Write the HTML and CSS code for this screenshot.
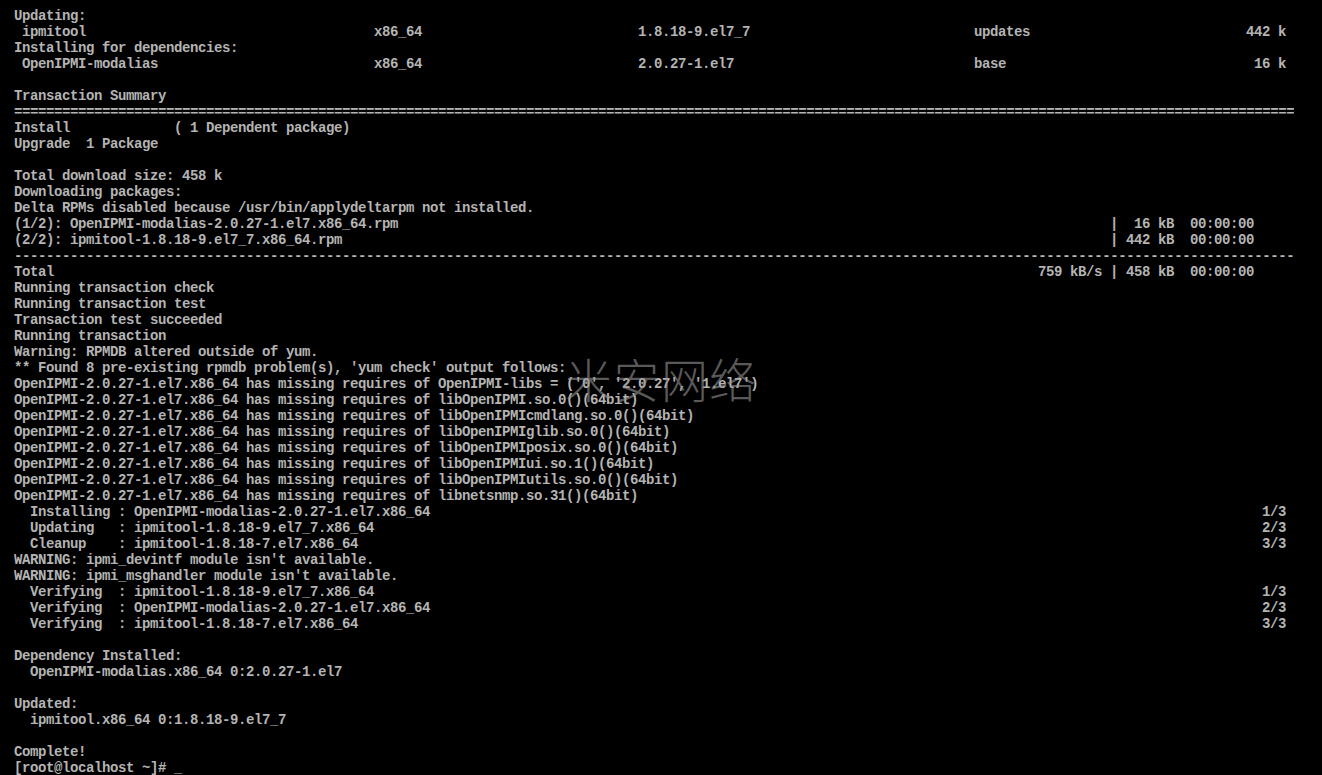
FILE: index.html
```html
<!DOCTYPE html>
<html lang="en">

<head>
    <meta charset="UTF-8">
    <title>tty1</title>
    <link rel="stylesheet" href="styles.css">
</head>

<body>
    <div class="screen">
        <div class="term">
            <div class="ln">Updating:</div>
            <div class="ln pkg"><span> ipmitool</span><span>x86_64</span><span>1.8.18-9.el7_7</span><span>updates</span><span class="size">442 k</span></div>
            <div class="ln">Installing for dependencies:</div>
            <div class="ln pkg"><span> OpenIPMI-modalias</span><span>x86_64</span><span>2.0.27-1.el7</span><span>base</span><span class="size">16 k</span></div>
            <div class="ln"></div>
            <div class="ln">Transaction Summary</div>
            <div class="ln">================================================================================================================================================================</div>
            <div class="ln sum"><span>Install</span><span>( 1 Dependent package)</span></div>
            <div class="ln">Upgrade  1 Package</div>
            <div class="ln"></div>
            <div class="ln">Total download size: 458 k</div>
            <div class="ln">Downloading packages:</div>
            <div class="ln">Delta RPMs disabled because /usr/bin/applydeltarpm not installed.</div>
            <div class="ln split w155"><span>(1/2): OpenIPMI-modalias-2.0.27-1.el7.x86_64.rpm</span><span>|  16 kB  00:00:00</span></div>
            <div class="ln split w155"><span>(2/2): ipmitool-1.8.18-9.el7_7.x86_64.rpm</span><span>| 442 kB  00:00:00</span></div>
            <div class="ln">----------------------------------------------------------------------------------------------------------------------------------------------------------------</div>
            <div class="ln split w155"><span>Total</span><span>759 kB/s | 458 kB  00:00:00</span></div>
            <div class="ln">Running transaction check</div>
            <div class="ln">Running transaction test</div>
            <div class="ln">Transaction test succeeded</div>
            <div class="ln">Running transaction</div>
            <div class="ln">Warning: RPMDB altered outside of yum.</div>
            <div class="ln">** Found 8 pre-existing rpmdb problem(s), 'yum check' output follows:</div>
            <div class="ln">OpenIPMI-2.0.27-1.el7.x86_64 has missing requires of OpenIPMI-libs = ('0', '2.0.27', '1.el7')</div>
            <div class="ln">OpenIPMI-2.0.27-1.el7.x86_64 has missing requires of libOpenIPMI.so.0()(64bit)</div>
            <div class="ln">OpenIPMI-2.0.27-1.el7.x86_64 has missing requires of libOpenIPMIcmdlang.so.0()(64bit)</div>
            <div class="ln">OpenIPMI-2.0.27-1.el7.x86_64 has missing requires of libOpenIPMIglib.so.0()(64bit)</div>
            <div class="ln">OpenIPMI-2.0.27-1.el7.x86_64 has missing requires of libOpenIPMIposix.so.0()(64bit)</div>
            <div class="ln">OpenIPMI-2.0.27-1.el7.x86_64 has missing requires of libOpenIPMIui.so.1()(64bit)</div>
            <div class="ln">OpenIPMI-2.0.27-1.el7.x86_64 has missing requires of libOpenIPMIutils.so.0()(64bit)</div>
            <div class="ln">OpenIPMI-2.0.27-1.el7.x86_64 has missing requires of libnetsnmp.so.31()(64bit)</div>
            <div class="ln split w159"><span>  Installing : OpenIPMI-modalias-2.0.27-1.el7.x86_64</span><span>1/3</span></div>
            <div class="ln split w159"><span>  Updating   : ipmitool-1.8.18-9.el7_7.x86_64</span><span>2/3</span></div>
            <div class="ln split w159"><span>  Cleanup    : ipmitool-1.8.18-7.el7.x86_64</span><span>3/3</span></div>
            <div class="ln">WARNING: ipmi_devintf module isn't available.</div>
            <div class="ln">WARNING: ipmi_msghandler module isn't available.</div>
            <div class="ln split w159"><span>  Verifying  : ipmitool-1.8.18-9.el7_7.x86_64</span><span>1/3</span></div>
            <div class="ln split w159"><span>  Verifying  : OpenIPMI-modalias-2.0.27-1.el7.x86_64</span><span>2/3</span></div>
            <div class="ln split w159"><span>  Verifying  : ipmitool-1.8.18-7.el7.x86_64</span><span>3/3</span></div>
            <div class="ln"></div>
            <div class="ln">Dependency Installed:</div>
            <div class="ln">  OpenIPMI-modalias.x86_64 0:2.0.27-1.el7</div>
            <div class="ln"></div>
            <div class="ln">Updated:</div>
            <div class="ln">  ipmitool.x86_64 0:1.8.18-9.el7_7</div>
            <div class="ln"></div>
            <div class="ln">Complete!</div>
            <div class="ln">[root@localhost ~]# <span class="cursor">_</span></div>
        </div>
        <div class="mark">米安网络</div>
    </div>
</body>

</html>
```

FILE: styles.css
```css
body {
    margin: 0;
    background: #000;
}

.screen {
    position: relative;
    height: 775px;
    overflow: hidden;
}

/* 160 x 48 text console, 8x16 cells */
.term {
    padding: 8px 0 0 14px;
    font-family: "Liberation Mono", "DejaVu Sans Mono", monospace;
    font-size: 14px;
    font-weight: 700;
    letter-spacing: -0.4px;
    line-height: 16px;
    color: #b4b4b4;
}

.ln {
    height: 16px;
    width: 1280px;
    white-space: pre;
    overflow: hidden;
}

.pkg {
    display: grid;
    grid-template-columns: 360px 264px 336px 272px 40px;
}

.size {
    text-align: right;
}

.sum {
    display: grid;
    grid-template-columns: 160px auto;
}

.split {
    display: flex;
    justify-content: space-between;
}

.w155 {
    width: 1240px;
}

.w159 {
    width: 1272px;
}

.mark {
    position: absolute;
    left: 565px;
    top: 354px;
    font-family: "Noto Sans CJK SC", sans-serif;
    font-size: 47px;
    line-height: 1;
    font-weight: 300;
    letter-spacing: 1px;
    color: rgba(150, 150, 150, 0.6);
}
```
